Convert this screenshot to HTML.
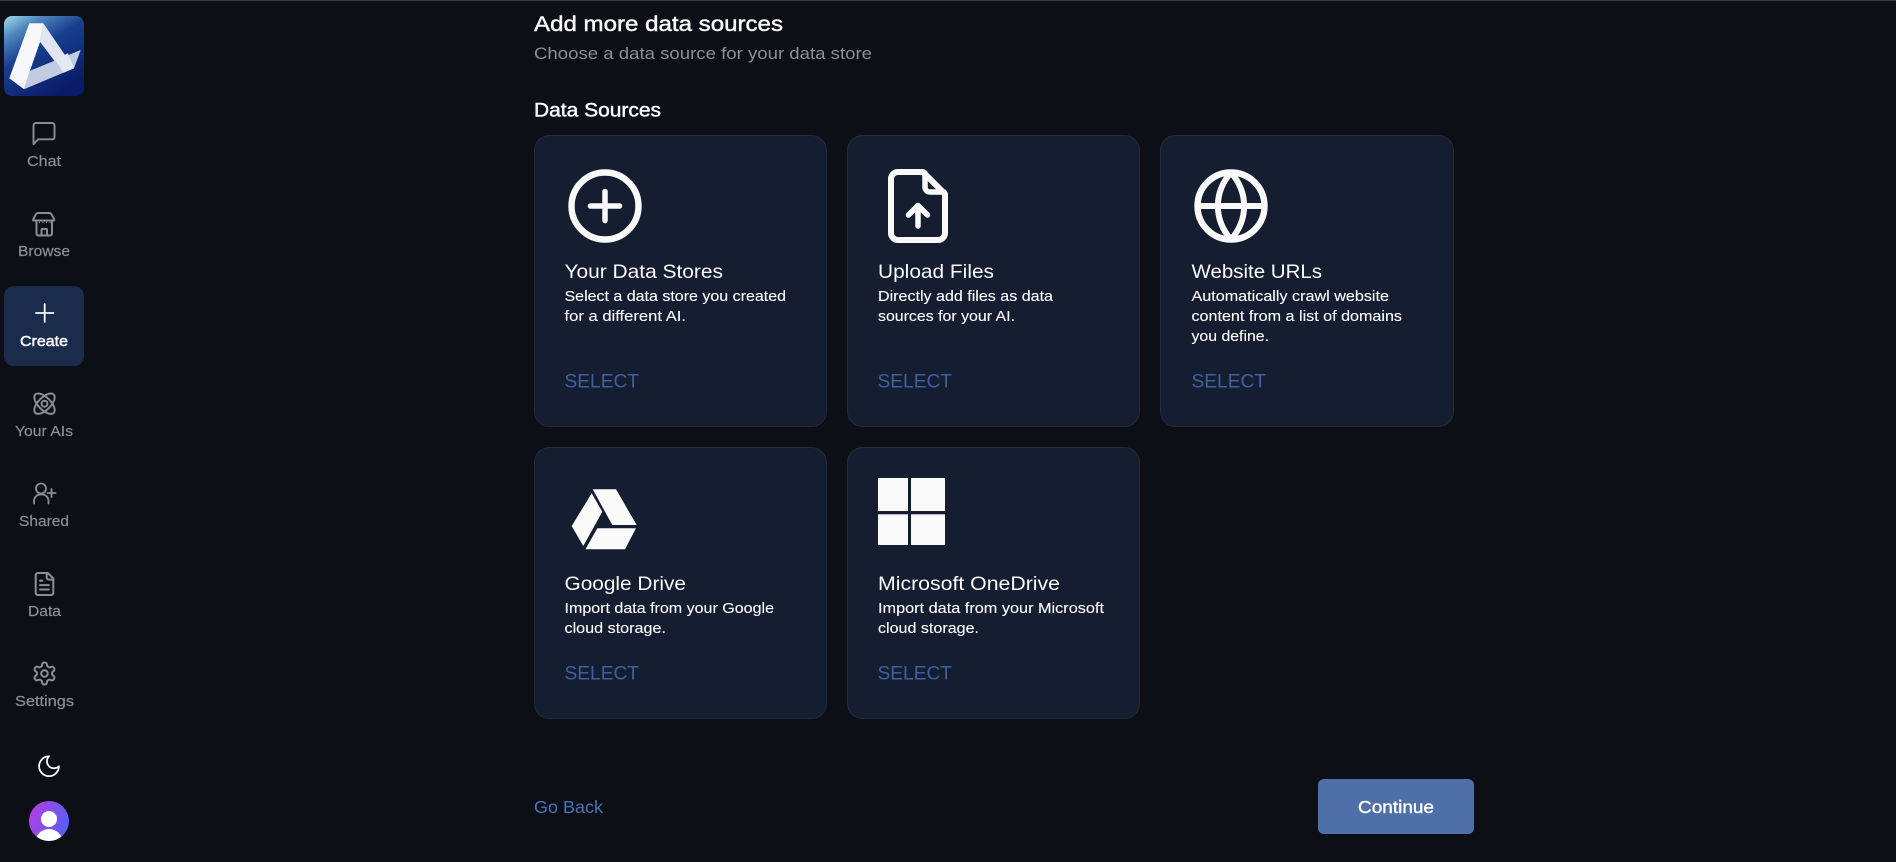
<!DOCTYPE html>
<html lang="en">
<head>
<meta charset="utf-8">
<title>Add more data sources</title>
<style>
html,body{margin:0;padding:0;width:1896px;height:862px;overflow:hidden;background:#0c0f16}
svg{display:block}
text{font-family:"Liberation Sans",Arial,sans-serif}
.nav{font-size:14.6px;fill:#8d8e90;stroke:#8d8e90;stroke-width:.2}
.t{font-size:19.4px;fill:#fafafa}
.d{font-size:14.6px;fill:#fbfbfb;stroke:#fbfbfb;stroke-width:.12}
.s{font-size:19.4px;fill:#3f5f9f}
.h{fill:#fafafa;stroke:#fafafa;stroke-width:.45}
.c{fill:#151e30;stroke:#252a35;stroke-width:1}
.i{fill:none;stroke:#8c8d8f;stroke-width:1.85;stroke-linecap:round;stroke-linejoin:round}
.w{fill:none;stroke:#fafafa;stroke-linecap:round;stroke-linejoin:round}
</style>
</head>
<body>
<svg width="1896" height="862" viewBox="0 0 1896 862" xmlns="http://www.w3.org/2000/svg">
<defs>
<linearGradient id="lg" x1="0" y1="0" x2="0.6" y2="1">
<stop offset="0" stop-color="#a4dcef"/><stop offset="0.22" stop-color="#4f86bd"/><stop offset="0.48" stop-color="#173f8e"/><stop offset="1" stop-color="#0a1c68"/>
</linearGradient>
<linearGradient id="av" x1="0" y1="0.2" x2="1" y2="0.6">
<stop offset="0" stop-color="#b53de6"/><stop offset="1" stop-color="#5560f2"/>
</linearGradient>
<clipPath id="avc"><circle cx="49" cy="821" r="20"/></clipPath>
</defs>
<rect width="1896" height="862" fill="#0c0f16"/>
<rect width="1896" height="1" fill="#3b3c3e"/>

<!-- logo -->
<rect x="4" y="16" width="80" height="80" rx="8" fill="url(#lg)"/>
<polygon points="43.300,23.300 74,68.300 63.300,72.700 40,41.700" fill="#e0e5f1"/>
<polygon points="30,70.700 80.700,50 74,68.300 24,89.300" fill="#c2cce0"/>
<polygon points="55,59.500 68,53.300 74,68.300 63.300,72.700" fill="#e3e9f3"/>
<polygon points="29.300,23.300 43.300,23.300 40,42 30,70.700 24,89.300 9.300,78.300" fill="#f6f8fc"/>

<!-- active nav -->
<rect x="4" y="286" width="80" height="80" rx="10" fill="#1b2b4c"/>

<!-- chat -->
<g transform="translate(30 119.500) scale(1.167)"><path class="i" style="stroke-width:1.650" d="M21 15a2 2 0 0 1-2 2H7l-4 4V5a2 2 0 0 1 2-2h14a2 2 0 0 1 2 2z"/></g>
<text class="nav" x="27" y="166" textLength="34" lengthAdjust="spacingAndGlyphs">Chat</text>

<!-- browse -->
<g class="i" style="stroke-width:2">
<path d="M39.500 213h10a2 2 0 0 1 1.700 .9l3 5.300v1.300h-21v-1.300l3-5.300a2 2 0 0 1 1.700-.9z" transform="translate(0 0)"/>
<path d="M36.500 221v12.500a2 2 0 0 0 2 2h11.500a2 2 0 0 0 2-2v-12.500"/>
<path d="M41.500 235.500v-5.500a1 1 0 0 1 1-1h3.500a1 1 0 0 1 1 1v5.500"/>
<path d="M35.500 222.500h17.500" stroke-dasharray="1 2.500" stroke-linecap="butt" style="stroke-width:1.500"/>
</g>
<text class="nav" x="18" y="256" textLength="52" lengthAdjust="spacingAndGlyphs">Browse</text>

<!-- create -->
<path d="M44.700 304v18M36 313h17.500" fill="none" stroke="#fafafa" stroke-width="1.800" stroke-linecap="round"/>
<text class="h" x="20" y="346" font-size="14.600" style="stroke-width:.5" textLength="48" lengthAdjust="spacingAndGlyphs">Create</text>

<!-- your ais -->
<g class="i" style="stroke-width:2" transform="translate(44.500 403.700)">
<ellipse rx="13" ry="6.200" transform="rotate(45)"/>
<ellipse rx="13" ry="6.200" transform="rotate(-45)"/>
<circle r="3"/>
</g>
<text class="nav" x="15" y="436" textLength="58" lengthAdjust="spacingAndGlyphs">Your AIs</text>

<!-- shared -->
<g class="i">
<circle cx="41" cy="488.500" r="5"/>
<path d="M34 503.500v-2.500a6.500 6.500 0 0 1 6.500-6.500h1.500a6.500 6.500 0 0 1 6.500 6.500v2.500"/>
<path d="M51.500 489v8M47.500 493h8"/>
</g>
<text class="nav" x="19" y="526" textLength="50" lengthAdjust="spacingAndGlyphs">Shared</text>

<!-- data -->
<g class="i" transform="translate(31.300 570.800) scale(1.100)">
<path d="M15 2H6a2 2 0 0 0-2 2v16a2 2 0 0 0 2 2h12a2 2 0 0 0 2-2V7Z"/>
<path d="M14 2v4a2 2 0 0 0 2 2h4"/><path d="M16 13H8"/><path d="M16 17H8"/><path d="M10 9H8"/>
</g>
<text class="nav" x="28" y="616" textLength="33" lengthAdjust="spacingAndGlyphs">Data</text>

<!-- settings -->
<g class="i" transform="translate(31.300 660.300) scale(1.100)">
<path d="M12.220 2h-.44a2 2 0 0 0-2 2v.18a2 2 0 0 1-1 1.730l-.43.25a2 2 0 0 1-2 0l-.15-.08a2 2 0 0 0-2.730.73l-.22.38a2 2 0 0 0 .73 2.730l.15.1a2 2 0 0 1 1 1.720v.51a2 2 0 0 1-1 1.740l-.15.09a2 2 0 0 0-.73 2.730l.22.38a2 2 0 0 0 2.730.73l.15-.08a2 2 0 0 1 2 0l.43.25a2 2 0 0 1 1 1.730V20a2 2 0 0 0 2 2h.44a2 2 0 0 0 2-2v-.18a2 2 0 0 1 1-1.730l.43-.25a2 2 0 0 1 2 0l.15.08a2 2 0 0 0 2.730-.73l.22-.39a2 2 0 0 0-.73-2.730l-.15-.08a2 2 0 0 1-1-1.740v-.5a2 2 0 0 1 1-1.740l.15-.09a2 2 0 0 0 .73-2.730l-.22-.38a2 2 0 0 0-2.730-.73l-.15.08a2 2 0 0 1-2 0l-.43-.25a2 2 0 0 1-1-1.730V4a2 2 0 0 0-2-2z"/>
<circle cx="12" cy="12" r="3"/>
</g>
<text class="nav" x="15" y="706" textLength="59" lengthAdjust="spacingAndGlyphs">Settings</text>

<!-- moon -->
<g transform="translate(35.800 753) scale(1.100)"><path d="M12 3a6 6 0 0 0 9 9 9 9 0 1 1-9-9Z" fill="none" stroke="#fafafa" stroke-width="1.600" stroke-linecap="round" stroke-linejoin="round"/></g>

<!-- avatar -->
<circle cx="49" cy="821" r="20" fill="url(#av)"/>
<g clip-path="url(#avc)" fill="#fff">
<circle cx="49" cy="819" r="8"/>
<ellipse cx="49" cy="843" rx="14" ry="14"/>
</g>

<!-- headings -->
<text class="h" x="534" y="31" font-size="21.500" textLength="249" lengthAdjust="spacingAndGlyphs">Add more data sources</text>
<text x="534" y="59" font-size="17" fill="#8d8e90" textLength="338" lengthAdjust="spacingAndGlyphs">Choose a data source for your data store</text>
<text class="h" x="534" y="116.500" font-size="19" textLength="127" lengthAdjust="spacingAndGlyphs">Data Sources</text>

<!-- cards -->
<rect class="c" x="534.500" y="135.500" width="292" height="291" rx="15"/>
<rect class="c" x="847.500" y="135.500" width="292" height="291" rx="15"/>
<rect class="c" x="1160.500" y="135.500" width="293" height="291" rx="15"/>
<rect class="c" x="534.500" y="447.500" width="292" height="271" rx="15"/>
<rect class="c" x="847.500" y="447.500" width="292" height="271" rx="15"/>

<!-- card 1 -->
<circle class="w" style="stroke-width:6.400" cx="605" cy="206" r="33.500"/>
<path class="w" style="stroke-width:5.500" d="M605 191.500v29M590.500 206h29"/>
<text class="t" x="564.500" y="278" textLength="158.500" lengthAdjust="spacingAndGlyphs">Your Data Stores</text>
<text class="d" x="564.500" y="301" textLength="221.500" lengthAdjust="spacingAndGlyphs">Select a data store you created</text>
<text class="d" x="564.500" y="321" textLength="121.500" lengthAdjust="spacingAndGlyphs">for a different AI.</text>
<text class="s" x="564.500" y="387.500" textLength="74.500" lengthAdjust="spacingAndGlyphs">SELECT</text>

<!-- card 2 -->
<path class="w" style="stroke-width:6" d="M891 179a7 7 0 0 1 7-7h25l22 22v39a7 7 0 0 1-7 7h-40a7 7 0 0 1-7-7z"/>
<path class="w" style="stroke-width:5.500" d="M925 173v14a5 5 0 0 0 5 5h14"/>
<path class="w" style="stroke-width:5.500" d="M918 226v-20M908.500 215l9.500-9.500 9.500 9.500"/>
<text class="t" x="878" y="278" textLength="116" lengthAdjust="spacingAndGlyphs">Upload Files</text>
<text class="d" x="878" y="301" textLength="175" lengthAdjust="spacingAndGlyphs">Directly add files as data</text>
<text class="d" x="878" y="321" textLength="137" lengthAdjust="spacingAndGlyphs">sources for your AI.</text>
<text class="s" x="877.500" y="387.500" textLength="74.500" lengthAdjust="spacingAndGlyphs">SELECT</text>

<!-- card 3 -->
<circle class="w" style="stroke-width:6.400" cx="1231" cy="206" r="33.500"/>
<path class="w" style="stroke-width:6" d="M1231 172.500c-17.500 20-17.500 47 0 67c17.500-20 17.500-47 0-67z"/>
<path class="w" style="stroke-width:6" d="M1199 206h64"/>
<text class="t" x="1191.500" y="278" textLength="130.500" lengthAdjust="spacingAndGlyphs">Website URLs</text>
<text class="d" x="1191.500" y="301" textLength="197.500" lengthAdjust="spacingAndGlyphs">Automatically crawl website</text>
<text class="d" x="1191.500" y="321" textLength="210.500" lengthAdjust="spacingAndGlyphs">content from a list of domains</text>
<text class="d" x="1191.500" y="341" textLength="77.500" lengthAdjust="spacingAndGlyphs">you define.</text>
<text class="s" x="1191.500" y="387.500" textLength="74.500" lengthAdjust="spacingAndGlyphs">SELECT</text>

<!-- card 4 -->
<g fill="#fafafa">
<polygon points="592.700,489.300 616,489.300 636.700,525 612.300,525"/>
<polygon points="591.700,493.300 602.300,511.700 583.300,546 571.700,526"/>
<polygon points="597.300,528.300 636,528.300 625,549.300 585.500,549.300"/>
</g>
<text class="t" x="564.500" y="590" textLength="121.500" lengthAdjust="spacingAndGlyphs">Google Drive</text>
<text class="d" x="564.500" y="613" textLength="209.500" lengthAdjust="spacingAndGlyphs">Import data from your Google</text>
<text class="d" x="564.500" y="633" textLength="101.500" lengthAdjust="spacingAndGlyphs">cloud storage.</text>
<text class="s" x="564.500" y="679.500" textLength="74.500" lengthAdjust="spacingAndGlyphs">SELECT</text>

<!-- card 5 -->
<g fill="#fafafa">
<rect x="878" y="478" width="30" height="33"/>
<rect x="911" y="478" width="34" height="33"/>
<rect x="878" y="514.300" width="30" height="30.700"/>
<rect x="911" y="514.300" width="34" height="30.700"/>
</g>
<text class="t" x="878" y="590" textLength="182" lengthAdjust="spacingAndGlyphs">Microsoft OneDrive</text>
<text class="d" x="878" y="613" textLength="226" lengthAdjust="spacingAndGlyphs">Import data from your Microsoft</text>
<text class="d" x="878" y="633" textLength="101" lengthAdjust="spacingAndGlyphs">cloud storage.</text>
<text class="s" x="877.500" y="679.500" textLength="74.500" lengthAdjust="spacingAndGlyphs">SELECT</text>

<!-- footer -->
<text x="534" y="813" font-size="17.500" fill="#4a72bb" textLength="69" lengthAdjust="spacingAndGlyphs">Go Back</text>
<rect x="1318" y="779" width="156" height="55" rx="6" fill="#4f6fa8"/>
<text x="1358" y="813" font-size="17.500" fill="#fff" stroke="#fff" stroke-width=".4" textLength="76" lengthAdjust="spacingAndGlyphs">Continue</text>
</svg>
</body>
</html>
